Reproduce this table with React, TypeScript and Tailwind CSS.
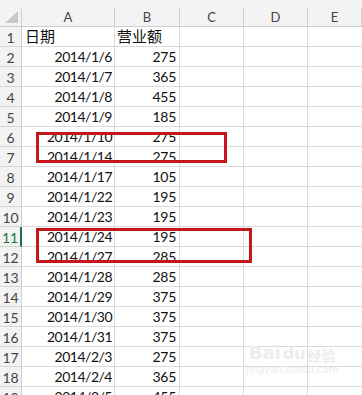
const rows: [string, string][] = [
  ["日期", "营业额"],
  ["2014/1/6", "275"],
  ["2014/1/7", "365"],
  ["2014/1/8", "455"],
  ["2014/1/9", "185"],
  ["2014/1/10", "275"],
  ["2014/1/14", "275"],
  ["2014/1/17", "105"],
  ["2014/1/22", "195"],
  ["2014/1/23", "195"],
  ["2014/1/24", "195"],
  ["2014/1/27", "285"],
  ["2014/1/28", "285"],
  ["2014/1/29", "375"],
  ["2014/1/30", "375"],
  ["2014/1/31", "375"],
  ["2014/2/3", "275"],
  ["2014/2/4", "365"],
  ["2014/2/5", "455"],
];

const cols = "grid grid-cols-[22px_93px_65px_64px_64px_1fr]";

export default function App() {
  return (
    <div className="relative w-[362px] h-[395px] overflow-hidden bg-white font-['Lato','Noto_Sans_CJK_SC',sans-serif] text-[#111]">
      {/* header strip */}
      <div className="h-[8px] bg-[#f3f3f3]" />
      <div className={`${cols} h-[19px] bg-[#f3f3f3] text-[13px] text-[#444]`}>
        <div className="relative border-r border-b border-[#cfcfcf]">
          <svg className="absolute left-[5px] top-[3px]" width="13" height="12">
            <polygon points="13,0 13,12 0,12" fill="#c8c8c8" />
          </svg>
        </div>
        {["A", "B", "C", "D", "E"].map((c) => (
          <div
            key={c}
            className="border-r border-b border-[#cfcfcf] flex items-center justify-center leading-none"
          >
            {c}
          </div>
        ))}
      </div>

      {rows.map(([a, b], i) => {
        const n = i + 1;
        const sel = n === 11;
        const head = n === 1;
        return (
          <div key={n} className={`${cols} h-[20px]`}>
            <div
              className={`bg-[#f3f3f3] border-b border-[#d4d4d4] flex items-end justify-center pb-[1px] text-[14px] leading-none ${
                sel
                  ? "border-r-2 border-r-[#217346] text-[#217346]"
                  : "border-r border-r-[#cfcfcf] text-[#444]"
              }`}
            >
              {n}
            </div>
            <div
              className={`border-r border-b border-[#dadada] flex items-end pb-[2px] leading-none whitespace-nowrap ${
                head
                  ? "justify-start pl-[3px] text-[15px]"
                  : "justify-end pr-[2px] text-[14px] tracking-[-0.5px]"
              }`}
            >
              {a}
            </div>
            <div
              className={`border-r border-b border-[#dadada] flex items-end pb-[2px] leading-none whitespace-nowrap ${
                head
                  ? "justify-start pl-[2px] text-[15px]"
                  : "justify-end pr-[3px] text-[14px] tracking-[-0.3px]"
              }`}
            >
              {b}
            </div>
            <div className="border-r border-b border-[#dadada]" />
            <div className="border-r border-b border-[#dadada]" />
            <div className="border-b border-[#dadada]" />
          </div>
        );
      })}

      {/* red highlight boxes */}
      <div className="absolute left-[36px] top-[132px] w-[191px] h-[31px] border-[3px] border-[#c4161c]" />
      <div className="absolute left-[36px] top-[228px] w-[216px] h-[35px] border-[3px] border-[#c4161c]" />

      {/* watermark */}
      <div className="absolute left-[246px] top-[344px] flex flex-col items-center leading-none text-[#ececec] pointer-events-none">
        <div className="flex items-end gap-[2px]">
          <span className="text-[18px] font-bold font-['DejaVu_Sans',sans-serif]">Bai</span>
          <span className="text-[16px] font-bold font-['DejaVu_Sans',sans-serif]">du</span>
          <span className="text-[14px] font-bold font-['Noto_Sans_CJK_SC',sans-serif]">经验</span>
        </div>
        <span className="mt-[3px] text-[10px] font-['DejaVu_Sans',sans-serif]">jingyan.baidu.com</span>
      </div>
    </div>
  );
}
